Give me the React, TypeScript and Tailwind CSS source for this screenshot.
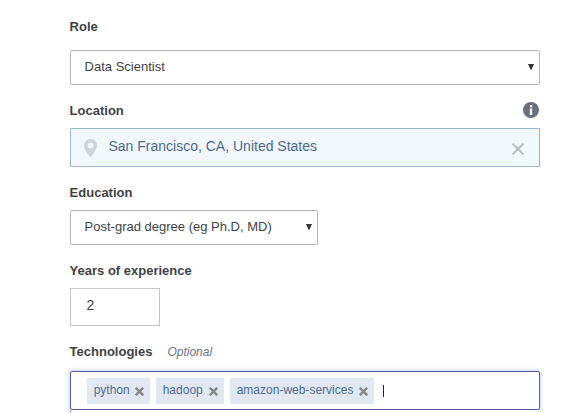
import type { ReactNode } from "react";

const tags = [
  { name: "python", width: "w-[63px]" },
  { name: "hadoop", width: "w-[68px]" },
  { name: "amazon-web-services", width: "w-[144px]" },
];

function Label({ children }: { children: ReactNode }) {
  return <label className="-ml-[0.4px] text-[13px] font-bold leading-5 text-[#3f4246]">{children}</label>;
}

function SelectBox({ value, className }: { value: string; className: string }) {
  return (
    <div
      className={`flex h-[35px] items-center justify-between rounded-[2px] border border-[#b4b7ba] bg-white pb-[2px] pl-[13.6px] pr-[5px] text-[13px] text-[#3f4246] ${className}`}
    >
      <span>{value}</span>
      <svg className="h-[6px] w-[6px]" viewBox="0 0 6 6" fill="#34373a">
        <path d="M0 0h6L3.3 6h-.6z" />
      </svg>
    </div>
  );
}

function Tag({ name, width }: { name: string; width: string }) {
  return (
    <span
      className={`flex h-[26px] items-center justify-between bg-[#e1e8f2] pl-[6.7px] pr-[6px] text-[12px] text-[#4c6c98] ${width}`}
    >
      <span className="pb-[2px]">{name}</span>
      <svg className="mt-[2px] h-[9px] w-[9px]" viewBox="0 0 9 9" stroke="#85888b" strokeWidth="2.5">
        <path d="M.8.8l7.4 7.4M8.2.8L.8 8.2" />
      </svg>
    </span>
  );
}

export default function App() {
  return (
    <main className="h-[413px] w-[572px] overflow-hidden bg-white pl-[70px] pt-[17px] font-['Liberation_Sans',Arial,sans-serif]">
      <form className="flex w-[470px] flex-col">
        <div className="flex h-[33px]">
          <Label>Role</Label>
        </div>
        <SelectBox value="Data Scientist" className="w-full" />

        <div className="mt-4 flex h-[27px] items-start justify-between">
          <Label>Location</Label>
          <svg className="mr-[1px] mt-[1px] h-4 w-4" viewBox="0 0 16 16">
            <circle cx="8" cy="8" r="8" fill="#6a6f7d" />
            <path d="M7 3h2.2v2.2H7zM6.8 6.5h2.4V13H6.8z" fill="#fff" />
          </svg>
        </div>
        <div className="flex h-[39px] items-center rounded-[1px] border border-[#9bb4d2] bg-[#f2f7fc] pl-[13px] pr-[15px]">
          <svg className="mt-[1px] h-[18px] w-[13px]" viewBox="0 0 13 18">
            <path
              fill="#ced2da"
              fillRule="evenodd"
              d="M6.5 0A6.4 6.4 0 0 0 0 6.4C0 11 6.5 18 6.5 18S13 11 13 6.4A6.4 6.4 0 0 0 6.5 0zm0 3.6a2.9 2.9 0 1 1 0 5.8 2.9 2.9 0 0 1 0-5.8z"
            />
          </svg>
          <span className="ml-[11.5px] flex-1 pb-[3px] text-[14px] text-[#4c6a90]">San Francisco, CA, United States</span>
          <svg className="mt-[3px] h-3 w-3" viewBox="0 0 12 12" stroke="#b9bec5" strokeWidth="2">
            <path d="M.7.7l10.6 10.6M11.3.7L.7 11.3" />
          </svg>
        </div>

        <div className="mt-4 flex h-[27px]">
          <Label>Education</Label>
        </div>
        <SelectBox value="Post-grad degree (eg Ph.D, MD)" className="w-[248px]" />

        <div className="mt-4 flex h-[27px]">
          <Label>Years of experience</Label>
        </div>
        <div className="flex h-[38px] w-[90px] items-center border border-[#c4c7ca] bg-white pb-[3px] pl-[15.5px] text-[14px] text-[#3f4246]">
          2
        </div>

        <div className="mt-4 flex h-[29px]">
          <Label>Technologies</Label>
          <span className="ml-[15px] text-[12px] italic leading-5 text-[#6a737c]">Optional</span>
        </div>
        <div className="flex h-[39px] items-center gap-[6px] rounded-[2px] border border-[#5158a4] bg-white pl-[16px] shadow-[0_0_3px_2px_#dfe6fa]">
          {tags.map((tag) => (
            <Tag key={tag.name} {...tag} />
          ))}
          <span className="ml-[3px] h-[12px] w-px bg-[#222]" />
        </div>
        <div className="relative h-[3px] border-l border-[#b9bccb] bg-white" />
      </form>
    </main>
  );
}
